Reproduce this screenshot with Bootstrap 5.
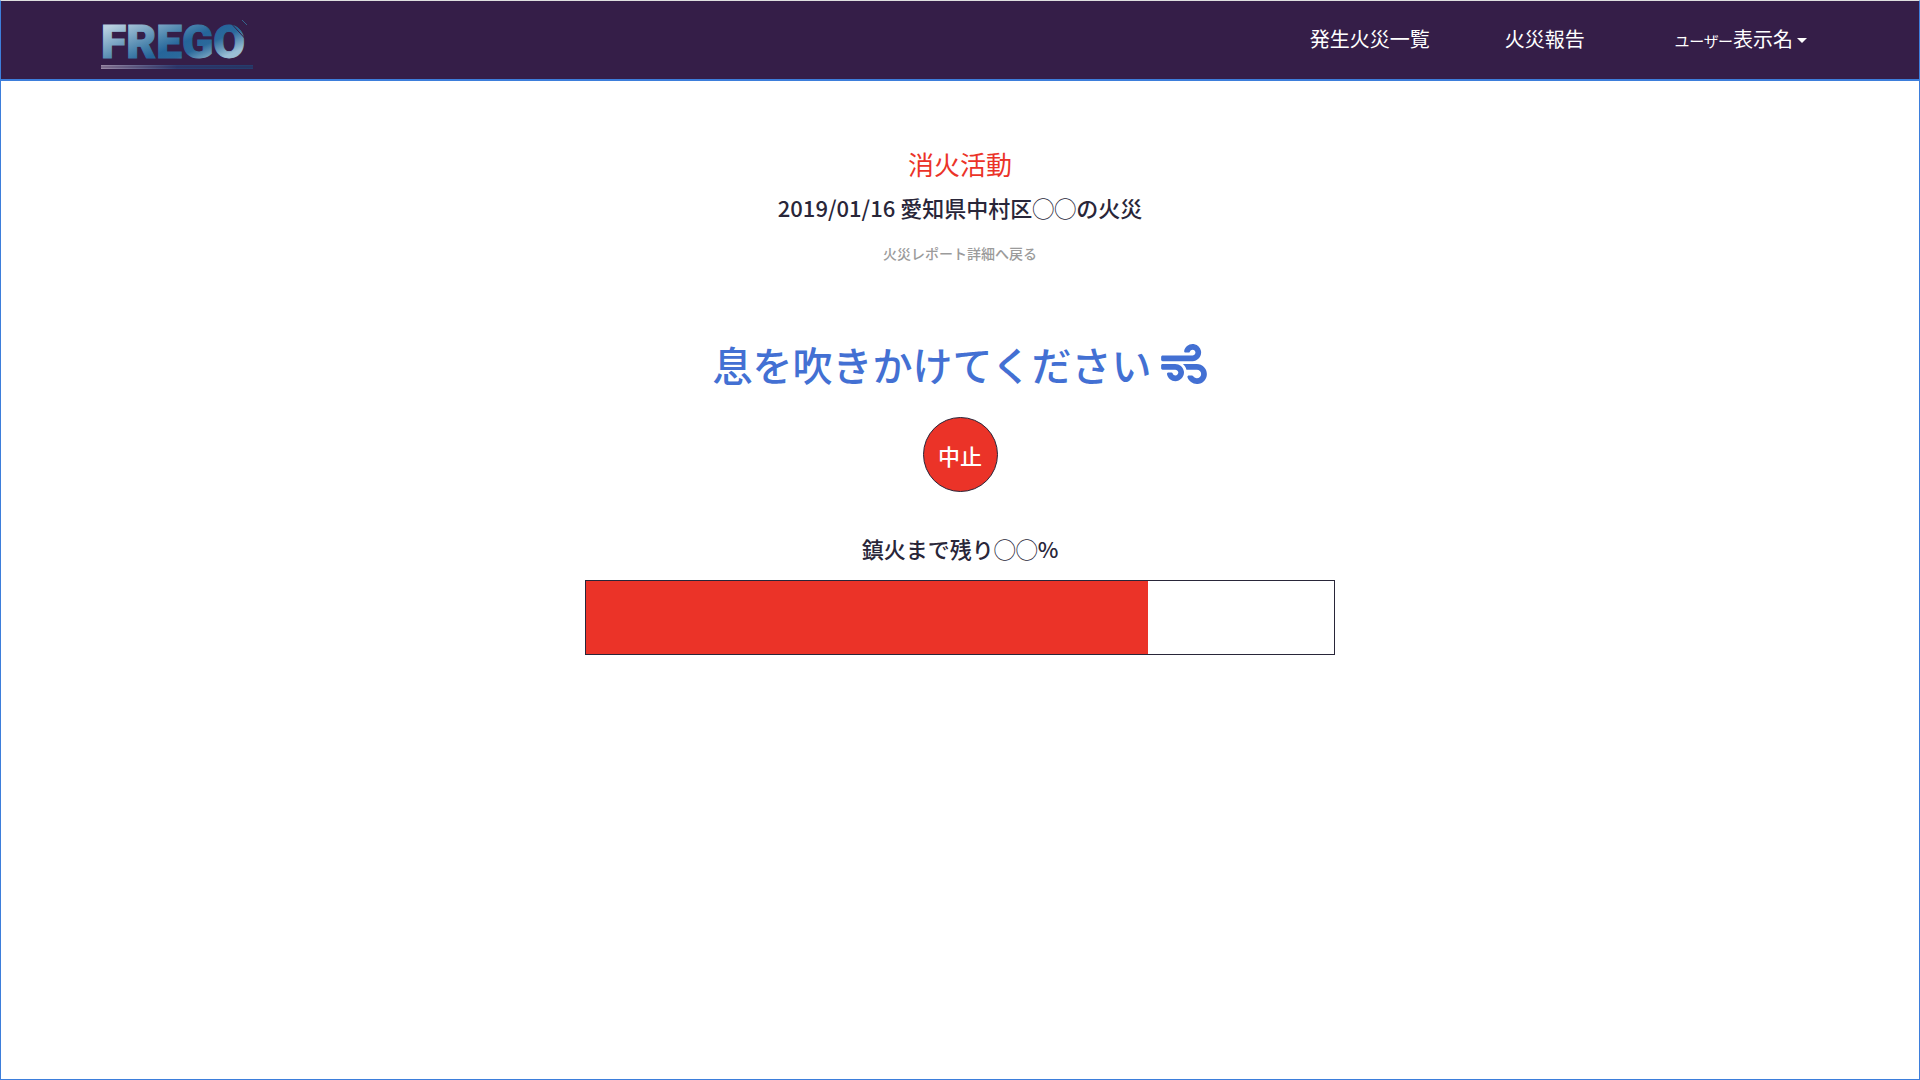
<!DOCTYPE html>
<html lang="ja">
<head>
<meta charset="utf-8">
<meta name="viewport" content="width=device-width, initial-scale=1">
<title>FREGO 消火活動</title>
<link href="https://cdn.jsdelivr.net/npm/bootstrap@5.3.0/dist/css/bootstrap.min.css" rel="stylesheet">
<style>
  :root { --ink: #292639; --flame: #eb3328; --breath: #4370d3; --edge: #3d7edb; --night: #351e48; }
  body { font-family: "Noto Sans CJK JP", sans-serif; color: var(--ink); background: #fff; }
  .page-frame { border: 1px solid var(--edge); border-top-color: #dfdfdf; }
  .site-bar { background: var(--night); border-bottom: 2px solid var(--edge); padding: 0 112px 0 100px; height: 80px; }
  .site-links { font-size: 20px; line-height: 30px; }
  .site-links .nav-link { color: #fff; padding: 0; }
  .gap-report { margin-left: 75px; }
  .gap-user { margin-left: 90px; }
  .kana { font-size: 15px; font-feature-settings: "palt"; }
  .user-menu::after { border-width: 5px 5px 0; margin-left: 4px; vertical-align: 4px; }
  .page-title { font-size: 26px; line-height: 38px; color: var(--flame); font-weight: 400; }
  .line-text { font-size: 22px; line-height: 32px; font-weight: 500; }
  .back-link { font-size: 14px; line-height: 20px; color: #9b9b9b; font-weight: 500; text-decoration: none; }
  .breath-title { font-size: 40px; line-height: 58px; color: var(--breath); font-weight: 500; gap: 10px; }
  .stop-btn { width: 75px; height: 75px; background: var(--flame); border: 1px solid var(--ink); color: #fff; }
  .stop-btn:hover { background: #c9281f; color: #fff; }
  .fire-meter { width: 750px; max-width: 100%; height: 75px; border: 1px solid var(--ink); background: #fff; }
  .fire-meter .progress-bar { background: var(--flame); }
</style>
</head>
<body>
<div class="page-frame min-vh-100">
  <header>
    <nav class="navbar site-bar flex-nowrap">
      <a class="d-block" href="#" aria-label="FREGO">
        <svg class="d-block" width="153" height="64" viewBox="0 0 153 64" role="img" aria-hidden="true">
          <defs>
            <linearGradient id="steel" gradientUnits="userSpaceOnUse" x1="50" y1="0" x2="80" y2="68">
              <stop offset="0" stop-color="#b9d0e0"/><stop offset=".45" stop-color="#4580aa"/>
              <stop offset=".6" stop-color="#25659a"/><stop offset=".75" stop-color="#2b699b"/><stop offset="1" stop-color="#9bbfd5"/>
            </linearGradient>
            <linearGradient id="rail" x1="0" x2="1">
              <stop offset="0" stop-color="#9a8aa5"/><stop offset=".5" stop-color="#2c3d72"/><stop offset="1" stop-color="#243d6c"/>
            </linearGradient>
          </defs>
          <text x="0" y="50" font-family="Roboto, sans-serif" font-size="46" font-weight="900" fill="url(#steel)" stroke="url(#steel)" stroke-width="1">FREGO</text>
          <path d="M127 12l22 24M131 12l19 21" stroke="#351e48" stroke-width="1"/>
          <path d="M141 12l5 5" stroke="#34658c" stroke-width="1"/>
          <rect x="0" y="57" width="152" height="4" fill="url(#rail)"/>
          <path d="M0 59h152" stroke="#351e48" stroke-opacity=".5"/>
        </svg>
      </a>
      <ul class="nav site-links flex-nowrap text-nowrap">
        <li class="nav-item"><a class="nav-link" href="#">発生火災一覧</a></li>
        <li class="nav-item gap-report"><a class="nav-link" href="#">火災報告</a></li>
        <li class="nav-item gap-user dropdown"><a class="nav-link dropdown-toggle user-menu" href="#" role="button" data-bs-toggle="dropdown" aria-expanded="false"><span class="kana">ユーザー</span>表示名</a></li>
      </ul>
    </nav>
  </header>
  <main class="d-flex flex-column align-items-center text-center pt-5">
    <h1 class="page-title mt-3 mb-2">消火活動</h1>
    <p class="line-text mb-3">2019/01/16 愛知県中村区◯◯の火災</p>
    <a class="back-link mt-1 mb-5" href="#">火災レポート詳細へ戻る</a>
    <h2 class="breath-title d-flex align-items-center mt-4 mb-4">息を吹きかけてください
      <svg width="46" height="40" viewBox="0 32 512 448" fill="currentColor" aria-hidden="true"><path d="M156.700 256H16c-8.800 0-16 7.200-16 16v32c0 8.800 7.200 16 16 16h142.200c15.900 0 30.800 10.900 33.400 26.600 3.300 20-12.100 37.400-31.600 37.400-14.100 0-26.100-9.200-30.400-21.900-2.100-6.300-8.600-10.100-15.200-10.100H81.600c-9.800 0-17.700 8.800-15.900 18.400 8.600 44.100 47.600 77.600 94.200 77.600 57.100 0 102.700-50.100 95.200-108.600C249 291 205.400 256 156.700 256zM16 224h336c59.700 0 106.800-54.800 93.800-116.700-7.600-36.200-36.900-65.500-73.100-73.100-55.400-11.600-105.100 24.900-114.900 75.500-1.900 9.600 6.100 18.300 15.800 18.300h32.800c6.700 0 13.100-3.800 15.200-10.100C325.900 105.200 337.900 96 352 96c19.400 0 34.900 17.400 31.600 37.400-2.600 15.700-17.400 26.600-33.400 26.600H16c-8.800 0-16 7.200-16 16v32c0 8.800 7.200 16 16 16zm384 32H243.700c19.300 16.600 33.200 38.800 39.800 64H400c26.500 0 48 21.500 48 48s-21.500 48-48 48c-17.900 0-33.300-9.900-41.600-24.400-2.900-5-8.700-7.600-14.500-7.600h-33.800c-10.900 0-19 10.800-15.300 21.100 17.800 50.600 70.500 84.800 129.400 72.300 41.200-8.700 75.100-41.600 84.700-82.700C526 321.500 470.500 256 400 256z"/></svg>
    </h2>
    <button type="button" class="btn rounded-circle p-0 line-text stop-btn">中止</button>
    <p class="line-text mt-4 pt-3 mb-3" id="remaining">鎮火まで残り◯◯%</p>
    <div class="progress rounded-0 fire-meter" role="progressbar" aria-labelledby="remaining" aria-valuenow="75.2" aria-valuemin="0" aria-valuemax="100">
      <div class="progress-bar" style="width: 75.2%"></div>
    </div>
  </main>
</div>
<script src="https://cdn.jsdelivr.net/npm/bootstrap@5.3.0/dist/js/bootstrap.bundle.min.js"></script>
</body>
</html>
